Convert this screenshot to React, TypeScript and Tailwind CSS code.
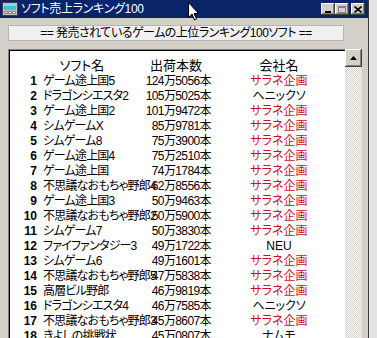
const rows: [string, string, string, string, boolean][] = [
  ["1", "ゲーム途上国5", "124万5056本", "サラネ企画", true],
  ["2", "ドラゴンシエスタ2", "105万5025本", "ヘニックソ", false],
  ["3", "ゲーム途上国2", "101万9472本", "サラネ企画", true],
  ["4", "シムゲームX", "85万9781本", "サラネ企画", true],
  ["5", "シムゲーム8", "75万3900本", "サラネ企画", true],
  ["6", "ゲーム途上国4", "75万2510本", "サラネ企画", true],
  ["7", "ゲーム途上国", "74万1784本", "サラネ企画", true],
  ["8", "不思議なおもちゃ野郎4", "62万8556本", "サラネ企画", true],
  ["9", "ゲーム途上国3", "50万9463本", "サラネ企画", true],
  ["10", "不思議なおもちゃ野郎2", "50万5900本", "サラネ企画", true],
  ["11", "シムゲーム7", "50万3830本", "サラネ企画", true],
  ["12", "ファイファンタジー3", "49万1722本", "NEU", false],
  ["13", "シムゲーム6", "49万1601本", "サラネ企画", true],
  ["14", "不思議なおもちゃ野郎5", "47万5838本", "サラネ企画", true],
  ["15", "高層ビル野郎", "46万9819本", "サラネ企画", true],
  ["16", "ドラゴンシエスタ4", "46万7585本", "ヘニックソ", false],
  ["17", "不思議なおもちゃ野郎3", "45万8607本", "サラネ企画", true],
  ["18", "きよしの挑戦状", "45万0807本", "ナムモ", false],
];

function WinIcon() {
  return (
    <svg width="16" height="16" viewBox="0 0 16 16" className="shrink-0">
      <rect x="0.5" y="1.5" width="15" height="13" fill="#c0c0c0" stroke="#404040" />
      <rect x="2" y="3" width="12" height="6" fill="#3cc8c8" />
      <rect x="2" y="3" width="12" height="2" fill="#7ee0e0" />
      <rect x="2" y="10" width="12" height="3" fill="#909090" />
      <rect x="3" y="11" width="2" height="1" fill="#e0e0e0" />
      <rect x="7" y="11" width="2" height="1" fill="#e0e0e0" />
      <rect x="11" y="11" width="2" height="1" fill="#e0e0e0" />
    </svg>
  );
}

function TitleBtn({ children, className = "" }: { children: React.ReactNode; className?: string }) {
  return (
    <div
      className={`flex h-[12px] w-[14px] items-center justify-center bg-[#d4d0c8] shadow-[inset_-1px_-1px_#404040,inset_1px_1px_#ffffff,inset_-2px_-2px_#808080] ${className}`}
    >
      {children}
    </div>
  );
}

export default function App() {
  return (
    <div className="relative flex h-[338px] w-[377px] overflow-hidden bg-[#e4e4e4] font-['Liberation_Sans','Noto_Sans_CJK_JP',sans-serif] text-[12px] leading-none text-black [font-feature-settings:'palt']">
      <div className="flex w-[369px] shrink-0 flex-col border-r border-[#404040] bg-[#d4d0c8]">
        <div className="flex h-[18px] shrink-0 items-center bg-[#0a246a] pl-[2px] pr-[3px]">
          <WinIcon />
          <span className="ml-[3px] text-[12px] tracking-[-0.3px] text-white">ソフト売上ランキング100</span>
          <div className="ml-auto flex items-center">
            <TitleBtn>
              <div className="mt-[5px] h-[2px] w-[6px] bg-black" />
            </TitleBtn>
            <TitleBtn>
              <div className="h-[7px] w-[8px] border border-t-2 border-[#808080]" />
            </TitleBtn>
            <TitleBtn className="ml-[2px]">
              <svg width="8" height="7" viewBox="0 0 8 7">
                <path d="M0.5 0.5 L7.5 6.5 M7.5 0.5 L0.5 6.5" stroke="#000" strokeWidth="1.6" />
              </svg>
            </TitleBtn>
          </div>
        </div>

        <div className="flex flex-1 flex-col pl-[8px]">
          <div className="mt-[7px] flex h-[16px] w-[336px] shrink-0 items-center justify-center border border-[#b4b4b4] bg-[#f0f0f0] tracking-[-0.5px]">
            == 発売されているゲームの上位ランキング100ソフト ==
          </div>

          <div className="mt-[8px] flex flex-1">
            <div className="w-[337px] shrink-0 border-l border-t border-[#808080]">
              <div className="h-full border-l border-t border-black bg-white pt-[7px]">
                <div className="flex h-[15px] items-center whitespace-nowrap text-[13px]">
                  <span className="w-[27px] shrink-0" />
                  <span className="w-[104px] shrink-0 pr-[14px] text-center">ソフト名</span>
                  <span className="w-[70px] shrink-0 text-center">出荷本数</span>
                  <span className="w-[136px] shrink-0 text-center">会社名</span>
                </div>
                {rows.map(([n, name, qty, co, red]) => (
                  <div key={n} className="flex h-[15px] items-center whitespace-nowrap">
                    <span className="w-[27px] shrink-0 text-right font-bold">{n}</span>
                    <span className="w-[104px] shrink-0 pl-[6px] tracking-[-0.8px]">{name}</span>
                    <span className="w-[70px] shrink-0 text-right tracking-[-0.6px]">{qty}</span>
                    <span className={`w-[136px] shrink-0 text-center ${red ? "text-[#c4102c]" : ""}`}>{co}</span>
                  </div>
                ))}
              </div>
            </div>

            <div className="flex w-[17px] shrink-0 flex-col">
              <div className="flex h-[18px] shrink-0 items-center justify-center bg-[#d4d0c8] shadow-[inset_-1px_-1px_#404040,inset_1px_1px_#ffffff,inset_-2px_-2px_#808080]">
                <svg width="7" height="4" viewBox="0 0 7 4">
                  <path d="M3.5 0 L7 4 L0 4 Z" fill="#000" />
                </svg>
              </div>
              <div className="flex-1 bg-[repeating-conic-gradient(#ffffff_0_25%,#d4d0c8_0_50%)] bg-[length:2px_2px]" />
            </div>
          </div>
        </div>
      </div>

      <svg className="absolute left-[188px] top-[2px]" width="12" height="19" viewBox="0 0 12 19">
        <path d="M0.5 0.5 L0.5 15.5 L4 12 L6.5 18 L8.5 17 L6 11.5 L10.5 11.5 Z" fill="#fff" stroke="#000" strokeWidth="1" />
      </svg>
    </div>
  );
}
